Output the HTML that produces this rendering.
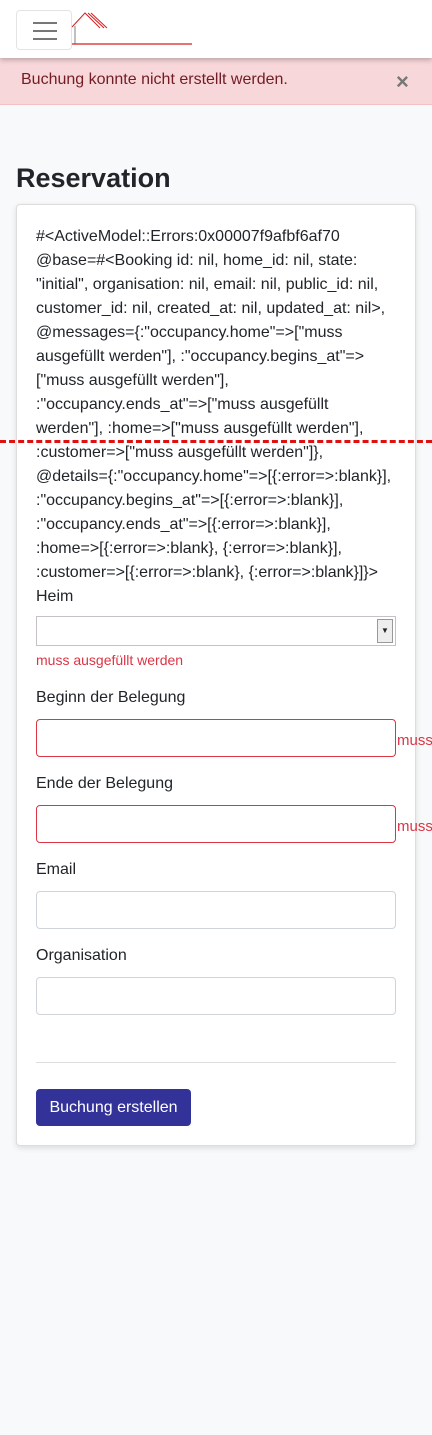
<!DOCTYPE html>
<html><head><meta charset="utf-8"><style>
*{box-sizing:border-box;margin:0;padding:0}
body{width:432px;height:1435px;background:#f8f9fa;font-family:"Liberation Sans",sans-serif;color:#212529;position:relative;overflow:hidden}
.nav{position:absolute;left:0;top:0;width:432px;height:58px;background:#fff;box-shadow:0 2px 5px rgba(0,0,0,.25);z-index:2}
.tog{position:absolute;left:16px;top:10px;width:56px;height:40px;border:1px solid #e3e3e3;border-radius:4px;background:#fff}
.tog i{position:absolute;left:16px;width:24px;height:2px;background:#777}
.alert{position:absolute;left:0;top:58px;width:432px;height:47px;background:#f8d7da;border-bottom:1px solid #f1c1c6;color:#721c24;font-size:16px}
.alert span{position:absolute;left:21px;top:13px}
.alert b{position:absolute;left:396px;top:13px;font-size:22px;color:#777;line-height:22px}
h1{position:absolute;left:16px;top:163px;font-size:27px;font-weight:bold}
.card{position:absolute;left:16px;top:204px;width:400px;height:942px;background:#fff;border:1px solid #ddd;border-radius:4px;box-shadow:0 2px 6px rgba(0,0,0,.12)}
.t{position:absolute;left:36px;font-size:16px;white-space:nowrap}
.pre{position:absolute;left:36px;top:225px;font-size:16px;line-height:24px;white-space:nowrap}
.inp{position:absolute;left:36px;width:360px;height:38px;border:1px solid #ced4da;border-radius:4px;background:#fff}
.err{border-color:#dc3545}
.red{color:#dc3545;font-size:14px}
.dash{position:absolute;left:0;top:440px;width:432px;border-top:3px dashed #e01010;z-index:3}
.btn{position:absolute;left:36px;top:1089px;width:155px;height:37px;background:#323299;color:#fff;border-radius:4px;font-size:16px;text-align:center;line-height:37px}
</style></head><body>
<div class="nav">
<div class="tog"><i style="top:11px"></i><i style="top:19px"></i><i style="top:27px"></i></div>
<svg style="position:absolute;left:70px;top:10px" width="125" height="36"><path d="M2 17 L15 3 L30 18" stroke="#d42020" fill="none" stroke-width="1"/><path d="M18 3 L34 18 M21 3 L37 18" stroke="#d42020" stroke-width="1"/><path d="M5 16 V34" stroke="#aaa" stroke-width="1.5"/><path d="M2 34 H122" stroke="#d42020" stroke-width="1.2"/></svg>
</div>
<div class="alert"><span>Buchung konnte nicht erstellt werden.</span><b>×</b></div>
<h1>Reservation</h1>
<div class="card"></div>
<div class="pre">#&lt;ActiveModel::Errors:0x00007f9afbf6af70<br>@base=#&lt;Booking id: nil, home_id: nil, state:<br>"initial", organisation: nil, email: nil, public_id: nil,<br>customer_id: nil, created_at: nil, updated_at: nil&gt;,<br>@messages={:"occupancy.home"=&gt;["muss<br>ausgefüllt werden"], :"occupancy.begins_at"=&gt;<br>["muss ausgefüllt werden"],<br>:"occupancy.ends_at"=&gt;["muss ausgefüllt<br>werden"], :home=&gt;["muss ausgefüllt werden"],<br>:customer=&gt;["muss ausgefüllt werden"]},<br>@details={:"occupancy.home"=&gt;[{:error=&gt;:blank}],<br>:"occupancy.begins_at"=&gt;[{:error=&gt;:blank}],<br>:"occupancy.ends_at"=&gt;[{:error=&gt;:blank}],<br>:home=&gt;[{:error=&gt;:blank}, {:error=&gt;:blank}],<br>:customer=&gt;[{:error=&gt;:blank}, {:error=&gt;:blank}]}&gt;<br>Heim</div>
<div class="dash"></div>
<div style="position:absolute;left:36px;top:616px;width:360px;height:30px;border:1px solid #c8c0c8;background:#fff"><div style="position:absolute;right:2px;top:2px;width:16px;height:24px;background:#eee;border:1px solid #999;font-size:8px;text-align:center;line-height:22px">▼</div></div>
<div class="t red" style="top:652px">muss ausgefüllt werden</div>
<div class="t" style="top:689px">Beginn der Belegung</div>
<div class="inp err" style="top:719px"></div>
<div class="t red" style="left:397px;top:732px;font-size:15px">muss</div>
<div class="t" style="top:775px">Ende der Belegung</div>
<div class="inp err" style="top:805px"></div>
<div class="t red" style="left:397px;top:818px;font-size:15px">muss</div>
<div class="t" style="top:861px">Email</div>
<div class="inp" style="top:891px"></div>
<div class="t" style="top:947px">Organisation</div>
<div class="inp" style="top:977px"></div>
<div style="position:absolute;left:36px;top:1062px;width:360px;border-top:1px solid #ddd"></div>
<div class="btn">Buchung erstellen</div>
</body></html>
